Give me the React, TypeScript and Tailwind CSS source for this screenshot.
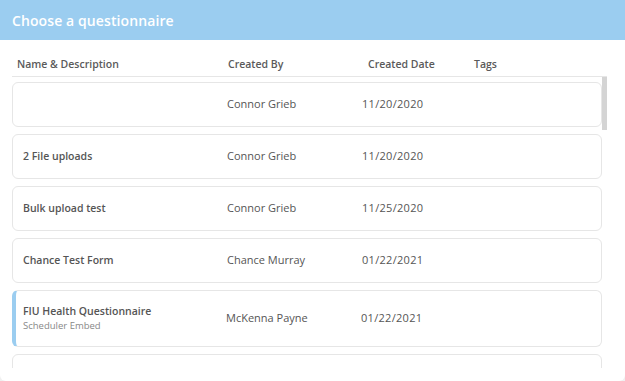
import React from "react";

type Row = { name: string; desc?: string; by: string; date: string; active?: boolean };

const rows: Row[] = [
  { name: "", by: "Connor Grieb", date: "11/20/2020" },
  { name: "2 File uploads", by: "Connor Grieb", date: "11/20/2020" },
  { name: "Bulk upload test", by: "Connor Grieb", date: "11/25/2020" },
  { name: "Chance Test Form", by: "Chance Murray", date: "01/22/2021" },
  { name: "FIU Health Questionnaire", desc: "Scheduler Embed", by: "McKenna Payne", date: "01/22/2021", active: true },
  { name: "", by: "", date: "" },
];

export default function App() {
  return (
    <div
      className="w-[625px] h-[381px] bg-[#f0f0f0] overflow-hidden"
      style={{ fontFamily: '"Open Sans", "Noto Sans", sans-serif' }}
    >
      <div className="h-[381px] bg-white rounded-b-[6px] flex flex-col">
        <div className="h-[40px] bg-[#9bcdf0] flex items-center px-[12px]">
          <span className="text-white text-[14px] font-semibold tracking-[0.1px]">Choose a questionnaire</span>
        </div>
        <div className="pl-[12px] pr-[18px]">
          <div className="flex items-center h-[37px] pt-[14px] border-b border-[#e6e6e6] text-[10.5px] font-semibold text-[#5a5a5a]">
            <div className="w-[215px] pl-[5px]">Name &amp; Description</div>
            <div className="w-[141px] pl-[1px]">Created By</div>
            <div className="w-[106px]">Created Date</div>
            <div>Tags</div>
          </div>
        </div>
        <div className="relative h-[291px] overflow-hidden pl-[12px] pr-[23px] pt-[5px]">
          <div className="absolute left-[602px] top-0 w-[5px] h-[53px] bg-[#d4d4d4]" />
          <div className="flex flex-col gap-[7px]">
            {rows.map((r, i) => (
              <div
                key={i}
                className={`flex items-center rounded-[6px] border border-[#e6e6e6] bg-white ${
                  r.desc ? "h-[57px]" : "h-[45px]"
                } ${r.active ? "border-l-[4px] border-l-[#9bcdf0] pl-[7px]" : "pl-[10px]"}`}
              >
                <div className={`${r.active ? "w-[203px]" : "w-[204px]"} flex flex-col`}>
                  <span className="text-[10.5px] font-semibold text-[#555] leading-[15px]">{r.name}</span>
                  {r.desc && <span className="text-[9.5px] text-[#888] leading-[14px]">{r.desc}</span>}
                </div>
                <div className="w-[135px] text-[11px] text-[#555]">{r.by}</div>
                <div className="text-[11px] text-[#555] tracking-[0.3px]">{r.date}</div>
              </div>
            ))}
          </div>
        </div>
      </div>
    </div>
  );
}
